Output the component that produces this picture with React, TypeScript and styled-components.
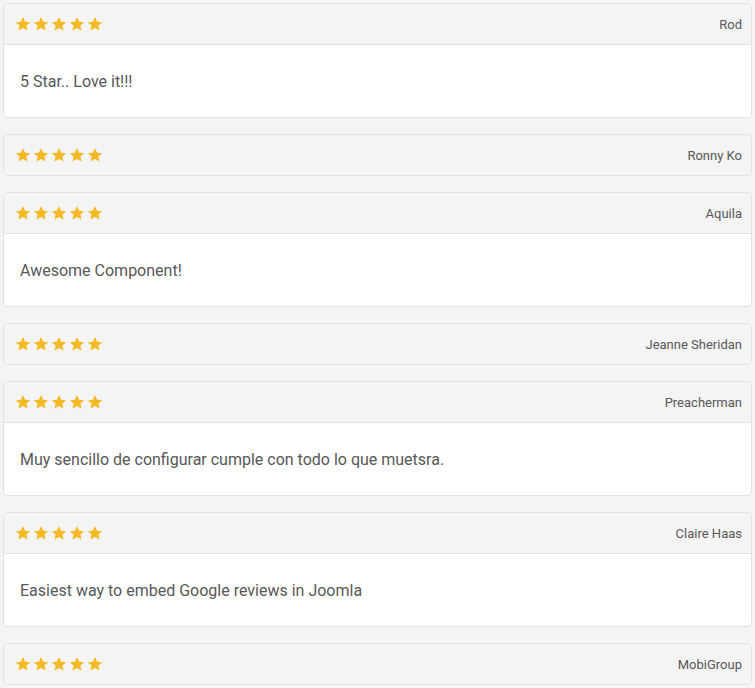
import * as React from 'react';
import styled, { createGlobalStyle } from 'styled-components';

const Global = createGlobalStyle`
  body {
    margin: 0;
    padding: 3px;
    background: #f4f4f4;
    font-family: Roboto, "Liberation Sans", sans-serif;
  }
`;

const List = styled.div`
  display: flex;
  flex-direction: column;
  gap: 16px;
`;

const Card = styled.div`
  background: #fff;
  border: 1px solid #dfe3e7;
  border-radius: 4px;
  overflow: hidden;
`;

const Header = styled.div<{ $alone: boolean }>`
  display: flex;
  align-items: center;
  justify-content: space-between;
  height: 40px;
  padding: 0 9px 0 11px;
  background: #f4f4f4;
  border-bottom: ${(p) => (p.$alone ? 'none' : '1px solid #dfe3e7')};
`;

const Stars = styled.div`
  display: flex;
  gap: 2px;
`;

const Name = styled.span`
  font-size: 13px;
  color: #585858;
`;

const Body = styled.div`
  padding: 25px 16px 23px;
  font-size: 16px;
  line-height: 24px;
  color: #585858;
`;

const Star = () => (
  <svg width="16" height="16" viewBox="0 0 24 24">
    <path
      fill="#f6b926"
      d="M12 1.5l3.2 7 7.6.8-5.7 5.1 1.6 7.5L12 18.1l-6.7 3.8 1.6-7.5L1.2 9.3l7.6-.8z"
    />
  </svg>
);

const reviews = [
  { name: 'Rod', text: '5 Star.. Love it!!!' },
  { name: 'Ronny Ko', text: '' },
  { name: 'Aquila', text: 'Awesome Component!' },
  { name: 'Jeanne Sheridan', text: '' },
  { name: 'Preacherman', text: 'Muy sencillo de configurar cumple con todo lo que muetsra.' },
  { name: 'Claire Haas', text: 'Easiest way to embed Google reviews in Joomla' },
  { name: 'MobiGroup', text: '' },
];

export default function App() {
  return (
    <>
      <Global />
      <List>
        {reviews.map((r) => (
          <Card key={r.name}>
            <Header $alone={!r.text}>
              <Stars>
                {[0, 1, 2, 3, 4].map((i) => (
                  <Star key={i} />
                ))}
              </Stars>
              <Name>{r.name}</Name>
            </Header>
            {r.text && <Body>{r.text}</Body>}
          </Card>
        ))}
      </List>
    </>
  );
}
